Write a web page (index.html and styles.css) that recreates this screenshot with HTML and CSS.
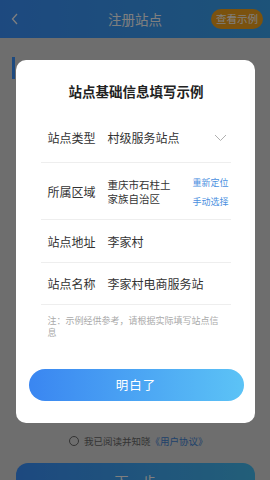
FILE: index.html
```html
<!DOCTYPE html>
<html lang="zh-CN">
<head>
<meta charset="utf-8">
<title>注册站点</title>
<link rel="stylesheet" href="styles.css">
</head>
<body>
<div class="page">
  <header class="topbar">
    <svg class="back" width="8" height="12" viewBox="0 0 8 12"><polyline points="6,1 1.5,6 6,11" fill="none" stroke="#fff" stroke-width="1.3"/></svg>
    <div class="topbar-title">注册站点</div>
    <div class="example-btn">查看示例</div>
  </header>
  <div class="section-head">基础信息</div>
  <div class="agree">
    <span class="radio"></span>
    <span>我已阅读并知晓</span><span class="agree-link">《用户协议》</span>
  </div>
  <div class="next-btn">下一步</div>
</div>

<div class="overlay">
  <div class="modal">
    <div class="modal-title">站点基础信息填写示例</div>
    <div class="rows">
      <div class="row row-type">
        <span class="label">站点类型</span>
        <span class="value">村级服务站点</span>
        <svg class="chev" width="13" height="8" viewBox="0 0 13 8"><polyline points="1,1 6.5,6.5 12,1" fill="none" stroke="#b0b0b0" stroke-width="1"/></svg>
      </div>
      <div class="row row-area">
        <span class="label">所属区域</span>
        <span class="value value-small">重庆市石柱土<br>家族自治区</span>
        <span class="links"><span>重新定位</span><span>手动选择</span></span>
      </div>
      <div class="row row-addr">
        <span class="label">站点地址</span>
        <span class="value">李家村</span>
      </div>
      <div class="row row-name">
        <span class="label">站点名称</span>
        <span class="value">李家村电商服务站</span>
      </div>
    </div>
    <p class="note">注：示例经供参考，请根据实际填写站点信息</p>
    <div class="ok-btn">明白了</div>
  </div>
</div>
</body>
</html>
```
FILE: styles.css
```css
* { box-sizing: border-box; }
html, body {
  margin: 0;
  padding: 0;
  width: 270px;
  height: 480px;
  overflow: hidden;
  font-family: "Noto Sans CJK SC", "Noto Sans", sans-serif;
  background: #dcdcdc;
}
.page {
  height: 499px;
  display: flex;
  flex-direction: column;
}
.topbar {
  height: 38px;
  flex: none;
  display: flex;
  align-items: center;
  padding: 0 7px 0 11px;
  background: linear-gradient(90deg, #3a93ff, #3ba6f2);
}
.back { flex: none; }
.topbar-title {
  flex: 1;
  text-align: center;
  color: #fff;
  font-size: 13.5px;
  padding-left: 40px;
}
.example-btn {
  flex: none;
  width: 52px;
  height: 20px;
  border-radius: 10px;
  background: #f6a51c;
  color: #fff;
  font-size: 10.5px;
  line-height: 20px;
  text-align: center;
}
.section-head {
  margin: 19px 0 0 12px;
  height: 22px;
  border-left: 3px solid #3c94ff;
  padding-left: 8px;
  font-size: 12px;
  line-height: 22px;
  color: #333;
}
.agree {
  margin-top: auto;
  height: 14px;
  display: flex;
  align-items: center;
  justify-content: flex-start;
  padding-left: 69px;
  font-size: 9.5px;
  color: #686868;
  line-height: 14px;
}
.radio {
  width: 10px;
  height: 10px;
  border: 1px solid #686868;
  border-radius: 50%;
  margin-right: 5px;
}
.agree-link { color: #3f84d6; }
.next-btn {
  margin: 15px 15px 0 16px;
  height: 36px;
  border-radius: 12px;
  background: linear-gradient(90deg, #3a92ff, #45bdf2);
  color: #fff;
  font-size: 14px;
  line-height: 36px;
  text-align: center;
}
.overlay {
  position: fixed;
  inset: 0;
  background: rgba(0, 0, 0, 0.5);
  display: flex;
  justify-content: center;
  align-items: flex-start;
  padding-top: 60px;
}
.modal {
  width: 239px;
  background: #fff;
  border-radius: 10px;
  padding: 21px 11px 22px 13px;
}
.modal-title {
  text-align: center;
  font-size: 13.5px;
  font-weight: 700;
  line-height: 20px;
  color: #222;
}
.rows {
  margin: 11px 13px 0 12px;
}
.row {
  display: flex;
  align-items: center;
  padding: 0 2px 0 7px;
  border-bottom: 1px solid #eeeeee;
  font-size: 12px;
  color: #333;
}
.row-type { height: 51px; }
.row-area { height: 57px; }
.row-addr { height: 43px; }
.row-name { height: 42px; }
.label { width: 60px; flex: none; }
.value { flex: 1; }
.value-small {
  font-size: 10.5px;
  line-height: 14px;
  margin-top: 1px;
}
.chev { flex: none; margin-right: 2px; margin-top: 2px; }
.links {
  flex: none;
  display: flex;
  flex-direction: column;
  gap: 6px;
  font-size: 9px;
  line-height: 13px;
  color: #4a8fe0;
  margin-top: 1px;
}
.note {
  margin: 10px 0 0 19px;
  width: 175px;
  font-size: 9px;
  line-height: 11.5px;
  color: #aaaaaa;
}
.ok-btn {
  margin: 31px 0 0 0;
  width: 215px;
  height: 32px;
  border-radius: 16px;
  background: linear-gradient(90deg, #3a86f1, #5cc3f6);
  color: #fff;
  font-size: 12.5px;
  line-height: 32px;
  text-align: center;
  letter-spacing: 1px;
}
```
